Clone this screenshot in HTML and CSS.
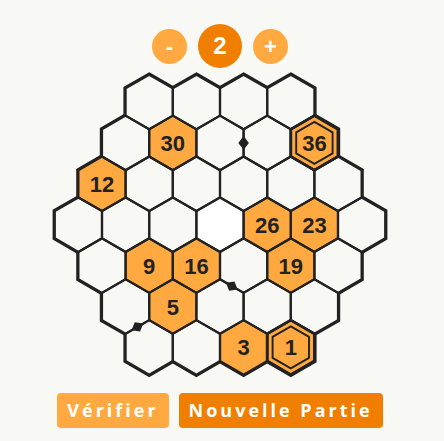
FILE: index.html
```html
<!DOCTYPE html>
<html lang="fr">
<head>
<meta charset="utf-8">
<title>Hidato</title>
<link rel="stylesheet" href="styles.css">
</head>
<body>
<main class="game">
  <div class="level-bar">
    <button class="step">-</button>
    <div class="level">2</div>
    <button class="step">+</button>
  </div>

  <svg class="board" width="340" height="306" viewBox="0 0 340 306" xmlns="http://www.w3.org/2000/svg">
    <defs>
      <polygon id="h" points="0,-27.25 23.6,-13.625 23.6,13.625 0,27.25 -23.6,13.625 -23.6,-13.625"/>
      <polygon id="hi" points="0,-21 18.19,-10.5 18.19,10.5 0,21 -18.19,10.5 -18.19,-10.5"/>
      <polygon id="dm" points="0,-6.8 5.3,0 0,6.8 -5.3,0"/>
      <g id="cells">
        <use href="#h" x="99.2" y="30"/><use href="#h" x="146.4" y="30"/><use href="#h" x="193.6" y="30"/><use href="#h" x="240.8" y="30"/>
        <use href="#h" x="75.6" y="70.9"/><use href="#h" x="122.8" y="70.9"/><use href="#h" x="170" y="70.9"/><use href="#h" x="217.2" y="70.9"/><use href="#h" x="264.4" y="70.9"/>
        <use href="#h" x="52" y="111.8"/><use href="#h" x="99.2" y="111.8"/><use href="#h" x="146.4" y="111.8"/><use href="#h" x="193.6" y="111.8"/><use href="#h" x="240.8" y="111.8"/><use href="#h" x="288" y="111.8"/>
        <use href="#h" x="28.4" y="152.7"/><use href="#h" x="75.6" y="152.7"/><use href="#h" x="122.8" y="152.7"/><use href="#h" x="170" y="152.7"/><use href="#h" x="217.2" y="152.7"/><use href="#h" x="264.4" y="152.7"/><use href="#h" x="311.6" y="152.7"/>
        <use href="#h" x="52" y="193.6"/><use href="#h" x="99.2" y="193.6"/><use href="#h" x="146.4" y="193.6"/><use href="#h" x="193.6" y="193.6"/><use href="#h" x="240.8" y="193.6"/><use href="#h" x="288" y="193.6"/>
        <use href="#h" x="75.6" y="234.5"/><use href="#h" x="122.8" y="234.5"/><use href="#h" x="170" y="234.5"/><use href="#h" x="217.2" y="234.5"/><use href="#h" x="264.4" y="234.5"/>
        <use href="#h" x="99.2" y="275.4"/><use href="#h" x="146.4" y="275.4"/><use href="#h" x="193.6" y="275.4"/><use href="#h" x="240.8" y="275.4"/>
      </g>
    </defs>

    <use href="#cells" class="rim"/>
    <use href="#cells" class="base"/>

    <g class="filled">
      <use href="#h" class="empty-sel" x="170" y="152.7"/>
      <use href="#h" x="122.8" y="70.9"/>
      <use href="#h" x="264.4" y="70.9"/>
      <use href="#h" x="52" y="111.8"/>
      <use href="#h" x="217.2" y="152.7"/>
      <use href="#h" x="264.4" y="152.7"/>
      <use href="#h" x="99.2" y="193.6"/>
      <use href="#h" x="146.4" y="193.6"/>
      <use href="#h" x="240.8" y="193.6"/>
      <use href="#h" x="122.8" y="234.5"/>
      <use href="#h" x="193.6" y="275.4"/>
      <use href="#h" x="240.8" y="275.4"/>
    </g>

    <use href="#cells" class="lines"/>

    <g class="endpoint">
      <use href="#h" x="264.4" y="70.9"/>
      <use href="#hi" class="inner" x="264.4" y="70.9"/>
      <use href="#h" x="240.8" y="275.4"/>
      <use href="#hi" class="inner" x="240.8" y="275.4"/>
    </g>

    <g class="marks">
      <use href="#dm" transform="translate(193.6 70.9)"/>
      <use href="#dm" transform="translate(181.8 214.05) rotate(-60)"/>
      <use href="#dm" transform="translate(87.4 254.95) rotate(60)"/>
    </g>

    <g class="nums">
      <text x="122.8" y="78.9">30</text>
      <text x="264.4" y="78.9">36</text>
      <text x="52" y="119.8">12</text>
      <text x="217.2" y="160.7">26</text>
      <text x="264.4" y="160.7">23</text>
      <text x="99.2" y="201.6">9</text>
      <text x="146.4" y="201.6">16</text>
      <text x="240.8" y="201.6">19</text>
      <text x="122.8" y="242.5">5</text>
      <text x="193.6" y="283.4">3</text>
      <text x="240.8" y="283.4">1</text>
    </g>
  </svg>

  <div class="actions">
    <button class="btn btn-light">Vérifier</button>
    <button class="btn btn-dark">Nouvelle Partie</button>
  </div>
</main>
</body>
</html>
```

FILE: styles.css
```css
html, body {
  margin: 0;
  padding: 0;
  background: #f8f8f4;
}

.game {
  display: flex;
  flex-direction: column;
  align-items: center;
  padding: 24px 4px 0 0;
}

.level-bar {
  display: flex;
  align-items: center;
  justify-content: center;
  gap: 11px;
  height: 44px;
}

.step {
  width: 35px;
  height: 35px;
  border: none;
  border-radius: 50%;
  background: #ffa940;
  color: #fff;
  font-family: "Liberation Sans", Arial, sans-serif;
  font-weight: bold;
  font-size: 22px;
  line-height: 35px;
  padding: 0;
  text-align: center;
}

.level {
  width: 44px;
  height: 44px;
  border-radius: 50%;
  background: #f07f00;
  color: #fff;
  font-family: "Liberation Sans", Arial, sans-serif;
  font-weight: bold;
  font-size: 24px;
  line-height: 44px;
  text-align: center;
}

.board {
  display: block;
  margin-top: 4px;
}

.rim {
  fill: none;
  stroke: #222;
  stroke-width: 4.4;
}

.base {
  fill: #f8f8f4;
  stroke: none;
}

.filled {
  fill: #ffa940;
}

.filled .empty-sel {
  fill: #ffffff;
}

.lines {
  fill: none;
  stroke: #222;
  stroke-width: 2.2;
}

.endpoint {
  fill: none;
  stroke: #222;
  stroke-width: 2.8;
}

.endpoint .inner {
  stroke-width: 1.9;
}

.marks {
  fill: #222;
}

.nums text {
  font-family: "Liberation Sans", Arial, sans-serif;
  font-weight: bold;
  font-size: 22px;
  fill: #222;
  text-anchor: middle;
}

.actions {
  display: flex;
  gap: 10px;
  margin-top: 15px;
}

.btn {
  border: none;
  border-radius: 4px;
  padding: 5px 10px;
  color: #fff;
  font-family: "Open Sans", sans-serif;
  font-weight: bold;
  font-size: 18px;
  line-height: 25px;
  letter-spacing: 3px;
}

.btn-light {
  background: #ffa940;
}

.btn-dark {
  background: #f07f00;
}
```
